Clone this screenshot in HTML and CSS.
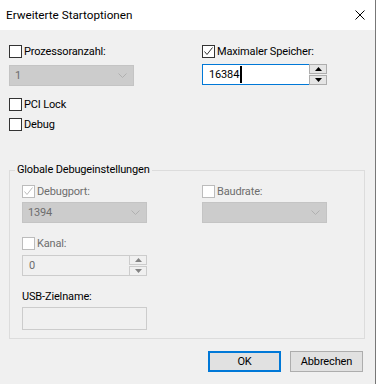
FILE: index.html
```html
<!DOCTYPE html>
<html lang="de">
<head>
<meta charset="utf-8">
<title>Erweiterte Startoptionen</title>
<link rel="stylesheet" href="styles.css">
</head>
<body>
<div class="window">
  <div class="titlebar">
    <span class="title">Erweiterte Startoptionen</span>
    <svg class="close" width="10" height="10" viewBox="0 0 10 10"><path d="M0.5 0.5 L9.5 9.5 M9.5 0.5 L0.5 9.5" stroke="#000" stroke-width="1" fill="none"/></svg>
  </div>
  <div class="client">
    <div class="top">
      <div class="col">
        <div class="chk"><span class="box"></span><span>Prozessoranzahl:</span></div>
        <div class="select dis w125 mt5"><span>1</span><svg class="chev" width="9" height="5" viewBox="0 0 9 5"><path d="M0.5 0.5 L4.5 4.5 L8.5 0.5" stroke="#b0b0b0" fill="none"/></svg></div>
        <div class="chk mt10"><span class="box"></span><span>PCI Lock</span></div>
        <div class="chk mt3"><span class="box"></span><span>Debug</span></div>
      </div>
      <div class="col">
        <div class="chk"><span class="box"><svg width="11" height="11" viewBox="0 0 11 11"><path d="M1.5 5.5 L4 8.5 L9.5 1.5" stroke="#333" fill="none"/></svg></span><span>Maximaler Speicher:</span></div>
        <div class="spin mt4">
          <div class="edit focus"><span>16384</span><span class="caret"></span></div>
          <div class="btns">
            <span class="sb"><svg width="7" height="4" viewBox="0 0 7 4"><path d="M3.5 0 L7 4 L0 4 Z" fill="#000"/></svg></span>
            <span class="sb"><svg width="7" height="4" viewBox="0 0 7 4"><path d="M0 0 L7 0 L3.5 4 Z" fill="#000"/></svg></span>
          </div>
        </div>
      </div>
    </div>
    <fieldset class="group">
      <legend>Globale Debugeinstellungen</legend>
      <div class="inner">
        <div class="col2">
          <div class="chk dis"><span class="box"><svg width="11" height="11" viewBox="0 0 11 11"><path d="M1.5 5.5 L4 8.5 L9.5 1.5" stroke="#bcbcbc" fill="none"/></svg></span><span>Debugport:</span></div>
          <div class="select dis w125 mt2"><span>1394</span><svg class="chev" width="9" height="5" viewBox="0 0 9 5"><path d="M0.5 0.5 L4.5 4.5 L8.5 0.5" stroke="#b0b0b0" fill="none"/></svg></div>
          <div class="chk dis mt12"><span class="box"></span><span>Kanal:</span></div>
          <div class="spin dspin mt3">
            <div class="edit disabled"><span>0</span></div>
            <div class="btns">
              <span class="sb"><svg width="7" height="4" viewBox="0 0 7 4"><path d="M3.5 0 L7 4 L0 4 Z" fill="#838383"/></svg></span>
              <span class="sb"><svg width="7" height="4" viewBox="0 0 7 4"><path d="M0 0 L7 0 L3.5 4 Z" fill="#838383"/></svg></span>
            </div>
          </div>
          <div class="lbl mt12">USB-Zielname:</div>
          <div class="textbox mt2"></div>
        </div>
        <div class="col2">
          <div class="chk dis"><span class="box"></span><span>Baudrate:</span></div>
          <div class="select dis w125 mt2"><span></span><svg class="chev" width="9" height="5" viewBox="0 0 9 5"><path d="M0.5 0.5 L4.5 4.5 L8.5 0.5" stroke="#b0b0b0" fill="none"/></svg></div>
        </div>
      </div>
    </fieldset>
    <div class="buttons">
      <button class="btn default">OK</button>
      <button class="btn">Abbrechen</button>
    </div>
  </div>
</div>
</body>
</html>
```

FILE: styles.css
```css
html, body {
  margin: 0;
  padding: 0;
}
body {
  width: 376px;
  height: 384px;
  overflow: hidden;
  background: #f0f0f0;
  font-family: Roboto, "Noto Sans", sans-serif;
  font-size: 11px;
  letter-spacing: -0.15px;
  color: #000;
}
.window {
  width: 376px;
  height: 384px;
  box-sizing: border-box;
  border-right: 1px solid #777;
  background: #f0f0f0;
}
.titlebar {
  height: 30px;
  background: #fff;
  display: flex;
  align-items: center;
  justify-content: space-between;
  padding: 0 10px 0 6px;
}
.title {
  font-size: 11.7px;
  letter-spacing: 0;
  line-height: 16px;
}
.close {
  display: block;
}
.client {
  padding: 13px 11px 0 9px;
}
.top {
  display: grid;
  grid-template-columns: 193px 1fr;
}
.col, .col2 {
  display: flex;
  flex-direction: column;
  align-items: flex-start;
}
.chk {
  height: 17px;
  display: flex;
  align-items: center;
  line-height: 17px;
}
.box {
  width: 13px;
  height: 13px;
  box-sizing: border-box;
  border: 1px solid #333;
  background: #fff;
  margin-right: 2px;
  display: flex;
  align-items: center;
  justify-content: center;
}
.box svg { display: block; }
.chk.dis { color: #6d6d6d; }
.chk.dis .box { border-color: #bcbcbc; }
.mt2 { margin-top: 2px; }
.mt3 { margin-top: 3px; }
.mt4 { margin-top: 4px; }
.mt5 { margin-top: 5px; }
.mt10 { margin-top: 10px; }
.mt12 { margin-top: 12px; }
.select {
  height: 21px;
  box-sizing: border-box;
  display: flex;
  align-items: center;
  justify-content: space-between;
  padding: 0 6px 0 5px;
}
.select.dis {
  background: #cccccc;
  border: 1px solid #c4c4c4;
  color: #6d6d6d;
}
.w125 { width: 125px; }
.chev { display: block; }
.spin {
  display: flex;
  height: 21px;
  width: 125px;
}
.edit {
  flex: 1;
  box-sizing: border-box;
  display: flex;
  align-items: center;
  padding-left: 6px;
}
.edit.focus {
  background: #fff;
  border: 1px solid #0078d7;
  border-right: none;
}
.caret {
  width: 2px;
  height: 17px;
  background: #000;
  margin-left: 1px;
}
.edit.disabled {
  background: #f0f0f0;
  border: 1px solid #cccccc;
  border-right: none;
  color: #6d6d6d;
}
.btns {
  width: 18px;
  display: flex;
  flex-direction: column;
  justify-content: space-between;
}
.sb {
  height: 10px;
  box-sizing: border-box;
  border: 1px solid #adadad;
  background: #e5e5e5;
  display: flex;
  align-items: center;
  justify-content: center;
}
.sb svg { display: block; }
.dspin .sb {
  border-color: #cccccc;
  background: #f0f0f0;
}
.group {
  margin: 29px 0 0 0;
  padding: 0 0 8px 0;
  border: 1px solid #dcdcdc;
  width: 356px;
  box-sizing: border-box;
}
.group legend {
  margin-left: 5px;
  padding: 0 2px;
  line-height: 16px;
}
.inner {
  display: grid;
  grid-template-columns: 180px 1fr;
  padding: 5px 0 0 12px;
}
.lbl {
  height: 17px;
  line-height: 17px;
}
.textbox {
  width: 125px;
  height: 23px;
  box-sizing: border-box;
  border: 1px solid #cccccc;
  background: #f0f0f0;
}
.buttons {
  display: flex;
  justify-content: flex-end;
  gap: 9px;
  margin-top: 12px;
  padding-right: 1px;
}
.btn {
  width: 73px;
  height: 21px;
  box-sizing: border-box;
  background: #e1e1e1;
  border: 1px solid #adadad;
  font-family: inherit;
  font-size: 11px;
  letter-spacing: inherit;
  color: #000;
  padding: 0;
  margin: 0;
}
.btn.default {
  border: 2px solid #0078d7;
}
```
